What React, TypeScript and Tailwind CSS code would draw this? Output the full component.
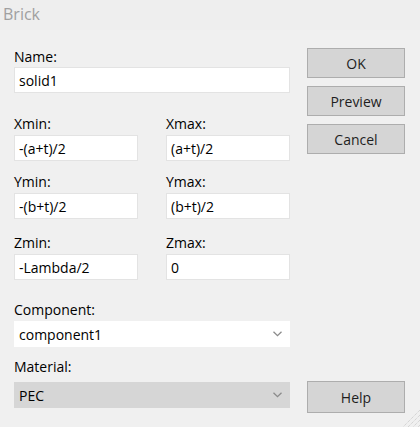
import React from "react";

const font = { fontFamily: '"Open Sans", "Noto Sans", sans-serif' };

function Label({ text, className = "" }: { text: string; className?: string }) {
  return <div className={"h-[19px] leading-[19px] text-[14px] text-black " + className}>{text}</div>;
}

function Field({ value, className = "" }: { value: string; className?: string }) {
  return (
    <div
      className={
        "h-[26px] bg-white border border-[#e3e3e3] pl-[4px] flex items-center text-[14px] text-black leading-[19px] " +
        className
      }
    >
      {value}
    </div>
  );
}

function Chevron() {
  return (
    <svg width="9" height="6" viewBox="0 0 9 6" className="mr-[8px]">
      <polyline points="0.5,0.8 4.5,4.6 8.5,0.8" fill="none" stroke="#8a8a8a" strokeWidth="1.3" />
    </svg>
  );
}

function Select({ value, gray }: { value: string; gray?: boolean }) {
  return (
    <div
      className={
        "h-[26px] flex items-center justify-between pl-[5px] text-[14px] text-black " +
        (gray ? "bg-[#d6d6d6]" : "bg-white")
      }
    >
      <span>{value}</span>
      <Chevron />
    </div>
  );
}

function Button({ text, className = "" }: { text: string; className?: string }) {
  return (
    <div
      className={
        "h-[30px] w-[98px] bg-[#d5d5d5] border border-[#adadad] flex items-center justify-center text-[14px] text-[#1e1e1e] " +
        className
      }
    >
      {text}
    </div>
  );
}

export default function App() {
  return (
    <div className="w-[420px] h-[427px] bg-[#f0f0f0] relative overflow-hidden" style={font}>
      <div className="h-[30px] bg-[#eeeeee] pl-[3px] flex items-center text-[16px] text-[#a0a0a0] leading-[20px] pb-[2px]">
        Brick
      </div>
      <div className="flex">
        <div className="w-[290px] pl-[14px] flex flex-col">
          <Label text="Name:" className="mt-[17px]" />
          <Field value="solid1" className="mt-[1px]" />
          <div className="grid grid-cols-[124px_124px] gap-x-[28px]">
            <Label text="Xmin:" className="mt-[21px]" />
            <Label text="Xmax:" className="mt-[21px]" />
            <Field value="-(a+t)/2" className="mt-[2px]" />
            <Field value="(a+t)/2" className="mt-[2px]" />
            <Label text="Ymin:" className="mt-[11px]" />
            <Label text="Ymax:" className="mt-[11px]" />
            <Field value="-(b+t)/2" className="mt-[2px]" />
            <Field value="(b+t)/2" className="mt-[2px]" />
            <Label text="Zmin:" className="mt-[14px]" />
            <Label text="Zmax:" className="mt-[14px]" />
            <Field value="-Lambda/2" className="mt-[2px]" />
            <Field value="0" className="mt-[2px]" />
          </div>
          <Label text="Component:" className="mt-[20px]" />
          <div className="mt-[2px]">
            <Select value="component1" />
          </div>
          <Label text="Material:" className="mt-[10px]" />
          <div className="mt-[6px]">
            <Select value="PEC" gray />
          </div>
        </div>
        <div className="ml-[17px] flex flex-col">
          <Button text="OK" className="mt-[18px]" />
          <Button text="Preview" className="mt-[8px]" />
          <Button text="Cancel" className="mt-[8px]" />
          <Button text="Help" className="mt-[227px] h-[32px]" />
        </div>
      </div>
      <svg width="20" height="20" viewBox="0 0 20 20" className="absolute right-0 bottom-0">
        <line x1="20" y1="3" x2="3" y2="20" stroke="#c8c8c8" strokeWidth="1" strokeDasharray="1 1" />
        <line x1="20" y1="8" x2="8" y2="20" stroke="#c8c8c8" strokeWidth="1" strokeDasharray="1 1" />
        <line x1="20" y1="13" x2="13" y2="20" stroke="#c8c8c8" strokeWidth="1" strokeDasharray="1 1" />
        <line x1="20" y1="18" x2="18" y2="20" stroke="#c8c8c8" strokeWidth="1" strokeDasharray="1 1" />
      </svg>
    </div>
  );
}
